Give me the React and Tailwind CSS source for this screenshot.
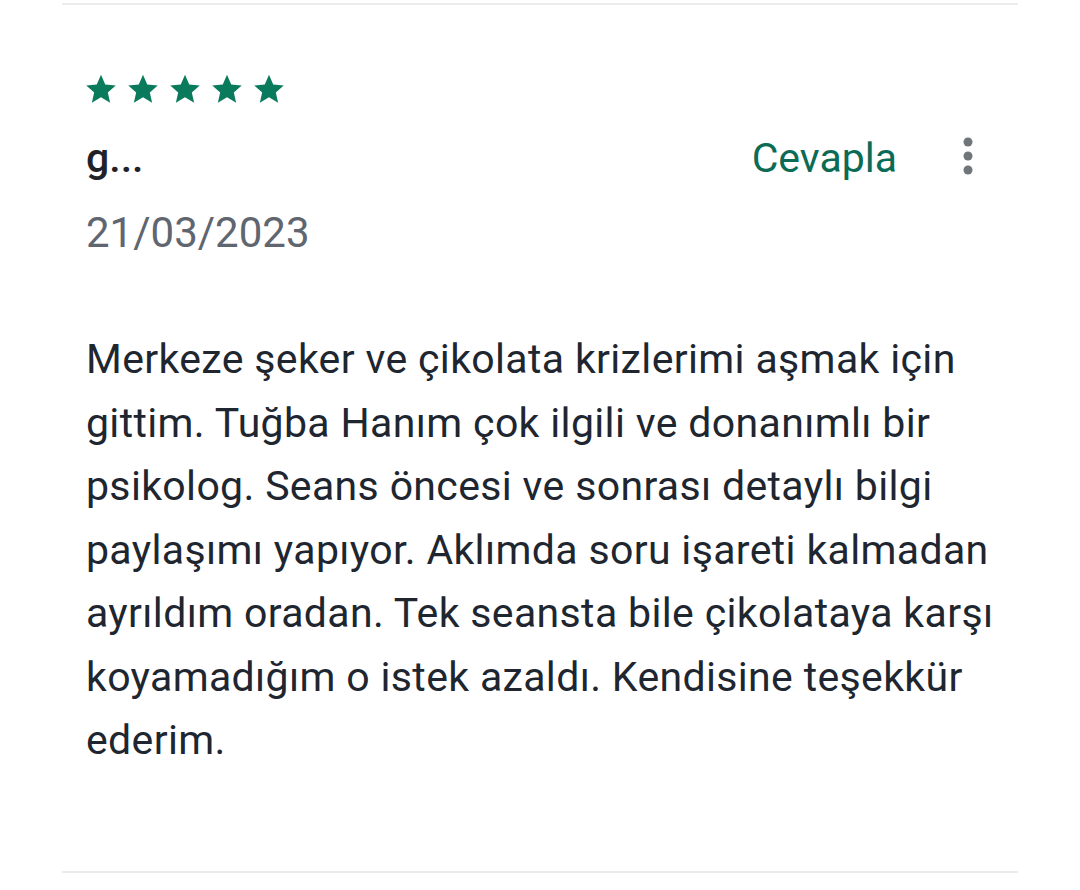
import React from 'react';

function Star() {
  return (
    <svg width="30" height="30" viewBox="1 1 22 22" className="fill-[#0a7a5c]">
      <path d="M12 1.6l3.1 7.1 7.7.7-5.8 5.1 1.7 7.6L12 18.1l-6.7 4 1.7-7.6-5.8-5.1 7.7-.7z" />
    </svg>
  );
}

export default function App() {
  const body =
    'Merkeze şeker ve çikolata krizlerimi aşmak için gittim. Tuğba Hanım çok ilgili ve donanımlı bir psikolog. Seans öncesi ve sonrası detaylı bilgi paylaşımı yapıyor. Aklımda soru işareti kalmadan ayrıldım oradan. Tek seansta bile çikolataya karşı koyamadığım o istek azaldı. Kendisine teşekkür ederim.';

  return (
    <div className="w-[1080px] h-[890px] bg-white pt-[3px] font-['Roboto',sans-serif]">
      <div className="mx-[62px] border-t-2 border-[#ebebeb]">
        <div className="pl-[24px] pr-[22px]">
          {/* stars */}
          <div className="mt-[69px] flex gap-[12px] h-[30px] items-center">
            <Star />
            <Star />
            <Star />
            <Star />
            <Star />
          </div>

          {/* author + actions */}
          <div className="mt-[30px] flex items-center h-[48px]">
            <span className="flex-1 text-[41px] leading-[48px] font-medium text-[#1f2329]">g...</span>
            <button className="text-[41px] leading-[48px] text-[#0b6b55]">Cevapla</button>
            <svg width="12" height="40" viewBox="0 0 12 40" className="ml-[65px] mr-[22px] -mt-[4px] fill-[#70757a]">
              <circle cx="6" cy="6" r="4.5" />
              <circle cx="6" cy="20" r="4.5" />
              <circle cx="6" cy="34" r="4.5" />
            </svg>
          </div>

          <div className="mt-[27px] text-[42px] leading-[48px] text-[#5f6670]">21/03/2023</div>

          <p className="mt-[71px] w-[912px] text-[41px] leading-[63.5px] tracking-[0.35px] text-[#202630]">{body}</p>
        </div>
        <div className="mt-[98px] border-t-2 border-[#ebebeb]" />
      </div>
    </div>
  );
}
